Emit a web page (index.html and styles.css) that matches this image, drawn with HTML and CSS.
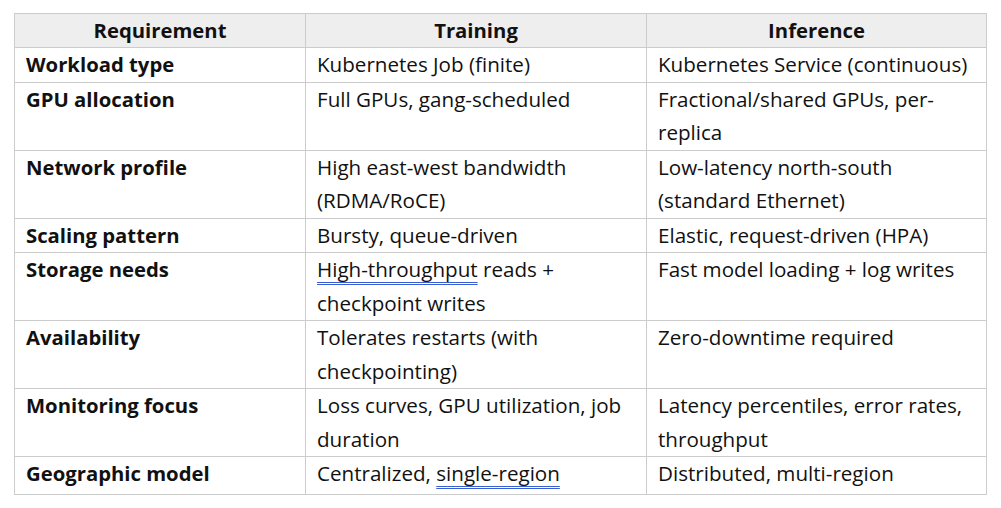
FILE: index.html
```html
<!DOCTYPE html>
<html>
<head>
<meta charset="utf-8">
<link rel="stylesheet" href="styles.css">
</head>
<body>
<table class="req">
  <colgroup>
    <col class="c1"><col class="c2"><col class="c3">
  </colgroup>
  <thead>
    <tr><th>Requirement</th><th>Training</th><th>Inference</th></tr>
  </thead>
  <tbody>
    <tr><td class="k">Workload type</td><td>Kubernetes Job (finite)</td><td>Kubernetes Service (continuous)</td></tr>
    <tr><td class="k">GPU allocation</td><td>Full GPUs, gang-scheduled</td><td>Fractional/shared GPUs, per-replica</td></tr>
    <tr><td class="k">Network profile</td><td>High east-west bandwidth (RDMA/RoCE)</td><td>Low-latency north-south (standard Ethernet)</td></tr>
    <tr><td class="k">Scaling pattern</td><td>Bursty, queue-driven</td><td>Elastic, request-driven (HPA)</td></tr>
    <tr><td class="k">Storage needs</td><td><span class="mark">High-throughput</span> reads + checkpoint writes</td><td>Fast model loading + log writes</td></tr>
    <tr><td class="k">Availability</td><td>Tolerates restarts (with checkpointing)</td><td>Zero-downtime required</td></tr>
    <tr><td class="k">Monitoring focus</td><td>Loss curves, GPU utilization, job duration</td><td>Latency percentiles, error rates, throughput</td></tr>
    <tr class="last"><td class="k">Geographic model</td><td>Centralized, <span class="mark">single-region</span></td><td>Distributed, multi-region</td></tr>
  </tbody>
</table>
</body>
</html>
```
FILE: styles.css
```css
html, body {
  margin: 0;
  padding: 0;
  background: #ffffff;
}
body {
  padding: 13px 0 0 14px;
  font-family: "Open Sans", "Liberation Sans", Arial, sans-serif;
  color: #111111;
}
.req {
  border-collapse: collapse;
  table-layout: fixed;
  width: 972px;
  font-size: 20.6px;
  line-height: 33.5px;
}
.c1 { width: 291px; }
.c2 { width: 341px; }
.c3 { width: 340px; }
.req th, .req td {
  border: 1px solid #cccccc;
  padding: 0 11px;
  vertical-align: top;
  text-align: left;
}
.req th {
  background: #eeeeee;
  text-align: center;
  font-weight: bold;
  font-size: 20.3px;
  line-height: 33px;
}
.req td.k {
  font-weight: bold;
  font-size: 20.3px;
}
.req tr.last td {
  padding-bottom: 3px;
}
.mark {
  text-decoration: underline double #3b5fd0;
  text-decoration-thickness: 1px;
  text-decoration-skip-ink: none;
  text-underline-offset: 5px;
}
```
